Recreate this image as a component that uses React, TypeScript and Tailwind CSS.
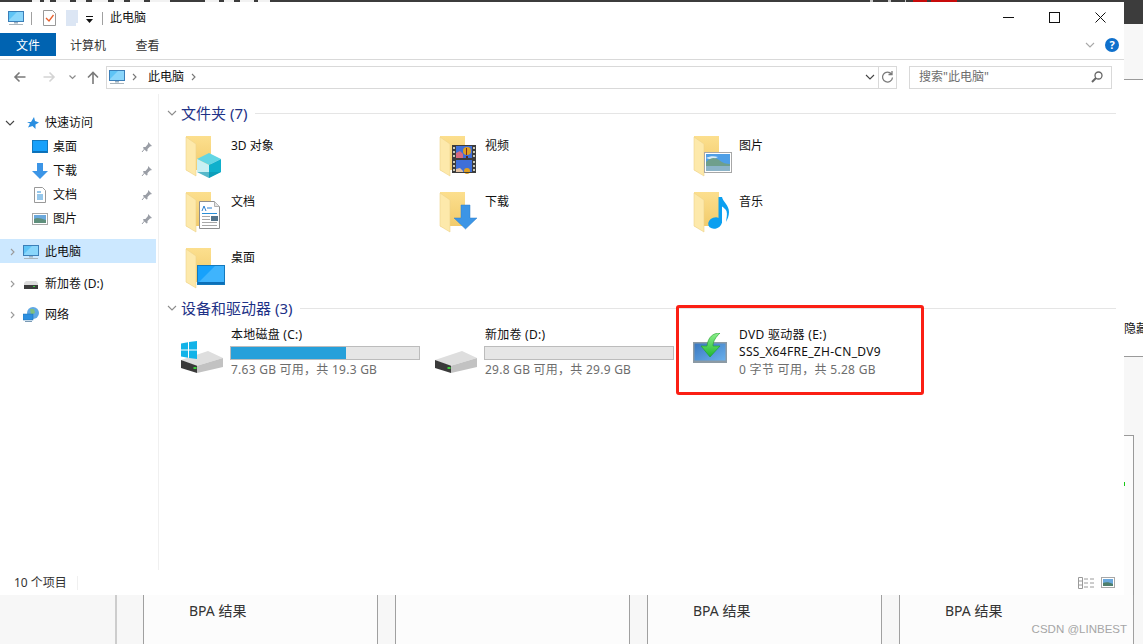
import React from "react";

const FONT = { fontFamily: '"Noto Sans","Noto Sans CJK SC",sans-serif' };

function FolderBase() {
  return (
    <>
      <defs>
        <linearGradient id="fb" x1="0" y1="0" x2="0" y2="1">
          <stop offset="0" stopColor="#fcdf8e" />
          <stop offset="1" stopColor="#f0c866" />
        </linearGradient>
      </defs>
      <path d="M1 1h25v34H11v5L1 35z" fill="url(#fb)" />
      <path d="M1 2l10 7v32L1 35z" fill="#fde9ab" stroke="#efd48c" strokeWidth="0.6" />
    </>
  );
}

function Ico({ children }: { children?: React.ReactNode }) {
  return (
    <svg width="46" height="46" viewBox="0 0 46 46" className="shrink-0 overflow-visible">
      <FolderBase />
      {children}
    </svg>
  );
}

const Cube = () => (
  <>
    <path d="M24 18l12 6-12 6-12-6z" fill="#62d6e4" />
    <path d="M12 24l12 6v13l-12-6z" fill="#c9f0f4" />
    <path d="M36 24l-12 6v13l12-6z" fill="#0fb0cc" />
    <path d="M24 37l12 0-12 6-12-6z" fill="#0b93ad" opacity=".6" />
  </>
);
const Film = () => (
  <>
    <rect x="13" y="10" width="24" height="28" fill="#3c3c3c" />
    <rect x="17" y="11" width="16" height="12" fill="#3f6fd8" />
    <rect x="17" y="25" width="16" height="12" fill="#3f6fd8" />
    <path d="M17 18l4-2 3 3v4h-7z" fill="#d86a80" />
    <path d="M17 34l4-1 3 3v1h-7z" fill="#e2c0a0" />
    <circle cx="28" cy="16" r="4" fill="#e0a020" />
    <rect x="27" y="13" width="1" height="7" fill="#7a2a20" />
    <rect x="27" y="21" width="2" height="2" fill="#5a2a20" />
    <circle cx="28" cy="36" r="3" fill="#e0a020" />
    <rect x="13" y="37" width="24" height="1" fill="#3c3c3c" />
    {[12, 16, 20, 26, 30, 34].map((y) => (
      <React.Fragment key={y}>
        <rect x="14" y={y} width="2" height="2" fill="#c9c9b8" />
        <rect x="34" y={y} width="2" height="2" fill="#c9c9b8" />
      </React.Fragment>
    ))}
  </>
);
const Pic = () => (
  <>
    <rect x="11.5" y="17.5" width="27" height="20" fill="#fff" stroke="#a7a7a7" />
    <rect x="13" y="19" width="24" height="17" fill="#4f9fe6" />
    <path d="M13 23c4-2 8-2 12-1l-6 3z" fill="#d8ecf8" />
    <path d="M13 27c5-5 9-5 13-2s7 4 11 4v7H13z" fill="#6f9f8c" />
    <rect x="13" y="31" width="24" height="5" fill="#8cb4c8" />
  </>
);
const Doc = () => (
  <>
    <path d="M14.5 10.5h15l5 5v22h-20z" fill="#fff" stroke="#8e8e8e" />
    <path d="M29.5 10.5v5h5" fill="#e4e4e4" stroke="#b0b0b0" />
    <path d="M17 20l2-5 2 5M22 17h5" stroke="#2a7fd0" fill="none" />
    <path d="M17 22.5h15" stroke="#2a8fd8" />
    <path d="M17 25.5h8M17 28.5h8M17 31.5h15M17 34.5h15" stroke="#a8a8a8" />
    <rect x="26" y="25" width="7" height="5" fill="#54748a" />
  </>
);
const Arrow = () => (
  <g transform="translate(15 14)">
    <path d="M7 0h9v13h7L11.500 24 0 13h7z" fill="#3c95e6" stroke="#2f7fc8" strokeWidth=".5" />
  </g>
);
const Music = () => (
  <>
    <ellipse cx="22" cy="32" rx="7" ry="5.500" fill="#0b9ff0" transform="rotate(-20 22 32)" />
    <path
      d="M25.500 6H29c1 5 7 8 7 15 0 4-1.500 7-3 10 .5-4 1.500-8 .5-11-1-2-3-3.500-4.500-4.500V32h-3.500z"
      fill="#0b9ff0"
    />
  </>
);
const Desk = () => (
  <>
    <rect x="12.5" y="18.500" width="27" height="19" fill="#17a1fb" stroke="#1379bd" />
    <path d="M13 37V36L30 19h9v18z" fill="#3fb4fd" />
    <rect x="13" y="35" width="26" height="2" fill="#0c6fb8" />
  </>
);

function Folder({ name, children }: { name: string; children?: React.ReactNode }) {
  return (
    <div className="flex items-start pl-[8px]">
      <Ico>{children}</Ico>
      <span className="text-[12px] leading-[20px] mt-[1px] text-[#111]">{name}</span>
    </div>
  );
}

function Hdd({ win }: { win?: boolean }) {
  return (
    <svg width="46" height="40" viewBox="0 0 46 40" className="shrink-0">
      <path d="M0 23l27-9 15 7-27 8z" fill="#dedede" />
      <path d="M16 28.700L42 21v9l-26 6z" fill="#c2c2c2" />
      <path d="M0 23l16 5.700V36L0 31z" fill="#3a3a3a" />
      <rect x="12.500" y="30" width="3" height="2" fill="#3bd13b" />
      {win && (
        <path
          d="M0 6.500l7-1.200v7.200H0zM8 5.100L16 4v8.500H8zM0 13.500h7v7.200L0 19.500zM8 13.500h8V22l-8-1.100z"
          fill="#12b3e8"
        />
      )}
    </svg>
  );
}

function Drive({
  name,
  used,
  sub,
  win,
}: {
  name: string;
  used: number;
  sub: string;
  win?: boolean;
}) {
  return (
    <div className="flex items-start h-[56px] pl-[4px]">
      <div className="w-[50px] pt-[10px] shrink-0">
        <Hdd win={win} />
      </div>
      <div className="w-[189px] tracking-[0.25px]">
        <div className="text-[12px] leading-[16px] text-[#111]">{name}</div>
        <div className="h-[14px] mt-[3px] -ml-[1px] border border-[#bcbcbc] bg-[#e6e6e6]">
          <div className="h-full bg-[#26a0da]" style={{ width: `${used}%` }} />
        </div>
        <div className="text-[12px] leading-[16px] mt-[2px] text-[#6d6d6d]">{sub}</div>
      </div>
    </div>
  );
}

function Chev({ className = "", d = "M1 1l4 4 4-4" }: { className?: string; d?: string }) {
  return (
    <svg width="10" height="10" viewBox="0 0 10 6" className={"overflow-visible shrink-0 " + className}>
      <path d={d} fill="none" stroke="currentColor" strokeWidth="1.100" />
    </svg>
  );
}

function Section({ title, children }: { title: string; children: React.ReactNode }) {
  return (
    <div>
      <div className="flex items-center h-[18px] pl-[1px]">
        <Chev className="text-[#8c8c8c] mr-[4px]" />
        <span className="text-[15px] leading-[18px] text-[#1e3287] whitespace-nowrap">{title}</span>
        <div className="flex-1 h-[1px] bg-[#e5e5e5] ml-[8px] mr-[8px]" />
      </div>
      {children}
    </div>
  );
}

function Pin() {
  return (
    <svg width="12" height="12" viewBox="0 0 12 12" className="absolute right-[3px]">
      <path d="M7 1l4 4-2 .5-2.500 2.500 0 2-1 .5-3.500-3.500.5-1h2L7 3z" fill="#9a9ea6" />
      <path d="M3.500 8L1 11" stroke="#9a9ea6" />
    </svg>
  );
}

function QuickItem({ name, children }: { name: string; children: React.ReactNode }) {
  return (
    <div className="relative flex items-center h-[24px] pl-[32px]">
      <span className="w-[21px] flex shrink-0">{children}</span>
      <span className="text-[12px] text-[#111]">{name}</span>
      <Pin />
    </div>
  );
}

const Monitor = ({ w = 16 }: { w?: number }) => (
  <svg width={w} height={w} viewBox="0 0 16 16" className="shrink-0">
    <rect x=".5" y="1.500" width="15" height="10" fill="#5ec4f6" stroke="#3c7fb8" />
    <path d="M1 11V10L9 2h6v9z" fill="#8ad6fb" />
    <rect x="6" y="12" width="4" height="1.500" fill="#9bb0c0" />
    <rect x="1" y="14" width="14" height="1" fill="#a8b4bc" />
  </svg>
);

export default function App() {
  return (
    <div className="relative w-[1143px] h-[644px] overflow-hidden bg-[#f7f7f7]" style={FONT}>
      {/* backdrop page behind the window */}
      <div className="absolute inset-x-0 top-0 h-[24px] bg-[#3c3c3c]">
        <svg width="1143" height="2" viewBox="0 0 1143 2" className="block">
          <path
            d="M32 0h8v2h-8zM44 0h6v2h-6zM56 0h14v2H56zM76 0h10v2H76zM92 0h16v2H92zM114 0h10v2h-10zM130 0h14v2h-14zM150 0h20v2h-20zM205 0h14v2h-14zM224 0h10v2h-10zM240 0h14v2h-14zM258 0h12v2h-12z"
            fill="#f2f2f2"
          />
          <path d="M870 0h3v2h-3zM888 0h3v2h-3zM905 0h1v2h-1z" fill="#c8c8c8" />
          <path d="M913 0h14v2h-14zM931 0h26v2h-26z" fill="#c80a0a" />
        </svg>
      </div>
      <div className="absolute left-[1124px] right-0 top-[24px] h-[56px] bg-[#f7f7f7] border-b border-[#9a9a9a]" />
      <div className="absolute left-[1124px] right-0 top-[80px] h-[277px] bg-white border-b border-[#9a9a9a]">
        <span className="absolute left-0 top-[241px] w-[19px] overflow-hidden whitespace-nowrap text-[12px] leading-[16px] text-[#111]">
          隐藏
        </span>
      </div>
      <div className="absolute left-[1124px] w-[10px] top-[435px] bottom-0 bg-[#fcfcfc] border-t border-r border-[#9a9a9a]" />
      <div className="absolute left-[1124px] top-[482px] w-[1px] h-[4px] bg-[#19c819]" />

      <div className="absolute left-0 right-0 top-[595px] bottom-0 flex text-[14px] text-[#333]">
        <div className="w-[117px] shrink-0 border-r-2 border-[#cdcdcd]" />
        <div className="w-[27px] shrink-0 border-r border-[#a0a0a0]" />
        <div className="w-[234px] shrink-0 bg-[#fcfcfc] pl-[45px] pt-[6px] leading-[20px] border-r border-[#a0a0a0]">BPA 结果</div>
        <div className="w-[18px] shrink-0 border-r border-[#a0a0a0]" />
        <div className="w-[234px] shrink-0 bg-[#fcfcfc] border-r border-[#a0a0a0]" />
        <div className="w-[18px] shrink-0 border-r border-[#a0a0a0]" />
        <div className="w-[234px] shrink-0 bg-[#fcfcfc] pl-[45px] pt-[6px] leading-[20px] border-r border-[#a0a0a0]">BPA 结果</div>
        <div className="w-[18px] shrink-0 border-r border-[#a0a0a0]" />
        <div className="w-[234px] shrink-0 bg-[#fcfcfc] pl-[45px] pt-[6px] leading-[20px] border-r border-[#a0a0a0]">BPA 结果</div>
      </div>
      <div
        className="absolute right-[16px] top-[621px] text-[11.5px] leading-[16px] text-[#a6a6a6] whitespace-nowrap"
        style={{ fontFamily: '"Liberation Sans",sans-serif' }}
      >
        CSDN @LINBEST
      </div>

      {/* explorer window */}
      <div className="absolute left-0 top-[2px] w-[1124px] h-[593px] bg-white flex flex-col">
        {/* title bar */}
        <div className="flex items-center h-[30px] shrink-0 pl-[8px] pt-[2px]">
          <Monitor />
          <div className="w-[1px] h-[13px] bg-[#a0a0a0] ml-[7px] mr-[11px]" />
          <svg width="14" height="16" viewBox="0 0 14 16" className="mr-[9px] shrink-0">
            <path d="M.5.500h9l3 3v12H.500z" fill="#fff" stroke="#999" />
            <path d="M3 8l3 3 4.500-6" fill="none" stroke="#e8602c" strokeWidth="1.300" />
          </svg>
          <svg width="13" height="16" viewBox="0 0 13 16" className="mr-[7px] shrink-0">
            <path d="M0 0h12v16H0z" fill="#dce6f4" />
            <path d="M10 13h3v3h-3z" fill="#fff" />
          </svg>
          <svg width="8" height="7" viewBox="0 0 8 7" className="mr-[8px] mt-[2px] shrink-0">
            <path d="M0 0h7v1H0zM0 3h7L3.500 7z" fill="#111" />
          </svg>
          <div className="w-[1px] h-[13px] bg-[#a0a0a0] mr-[7px]" />
          <span className="text-[12px] text-[#111]">此电脑</span>
          <div className="flex-1" />
          <div className="flex items-center -mt-[2px]">
            <svg width="11" height="11" viewBox="0 0 11 11" className="shrink-0 mr-[35px]">
              <path d="M0 5.500h11" stroke="#111" />
            </svg>
            <svg width="11" height="11" viewBox="0 0 11 11" className="shrink-0 mr-[35px]">
              <rect x=".5" y=".500" width="10" height="10" fill="none" stroke="#111" />
            </svg>
            <svg width="11" height="11" viewBox="0 0 11 11" className="shrink-0 mr-[18px]">
              <path d="M.5.500l10 10M10.500.500l-10 10" stroke="#111" />
            </svg>
          </div>
        </div>
        {/* ribbon */}
        <div className="flex items-stretch h-[28px] shrink-0 border-b border-[#d9d9d9] text-[12px] text-[#333]">
          <div className="w-[56px] h-[23px] mt-[1px] pt-[2px] bg-[#0063b1] text-white flex items-center justify-center">文件</div>
          <div className="w-[64px] h-[23px] mt-[1px] pt-[2px] flex items-center justify-center">计算机</div>
          <div className="w-[55px] h-[23px] mt-[1px] pt-[2px] flex items-center justify-center">查看</div>
          <div className="flex-1" />
          <div className="flex items-center h-[24px] mt-[1px] pr-[5px]">
            <Chev className="text-[#a8a8a8] mr-[10px]" />
            <div className="w-[14px] h-[14px] rounded-full bg-[#0f70cc] text-white text-[11px] font-bold leading-[14px] text-center">?</div>
          </div>
        </div>
        {/* address bar */}
        <div className="flex items-center h-[34px] shrink-0">
          <div className="w-[106px] flex items-center shrink-0 pl-[13px] h-full">
            <svg width="13" height="12" viewBox="0 0 13 12" className="mr-[17px] shrink-0">
              <path d="M12.500 6H2M6.500 1.500L2 6l4.500 4.500" fill="none" stroke="#7a7a7a" strokeWidth="1.600" />
            </svg>
            <svg width="13" height="12" viewBox="0 0 13 12" className="mr-[13px] shrink-0">
              <path d="M.5 6H11M6.500 1.500L11 6l-4.500 4.500" fill="none" stroke="#d4d4d4" strokeWidth="1.600" />
            </svg>
            <svg width="7" height="5" viewBox="0 0 7 5" className="mr-[11px] shrink-0">
              <path d="M.5.500L3.500 3.500 6.500.500" fill="none" stroke="#8c8c8c" strokeWidth="1.200" />
            </svg>
            <svg width="12" height="13" viewBox="0 0 12 13" className="shrink-0">
              <path d="M6 13V2M1 6.500L6 1.500l5 5" fill="none" stroke="#7a7a7a" strokeWidth="1.600" />
            </svg>
          </div>
          <div className="flex items-center w-[791px] h-[23px] border border-[#d9d9d9] pl-[2px] text-[12px] text-[#111]">
            <Monitor />
            <Chev className="mx-[5px] text-[#777]" d="M3 0l3 3-3 3" />
            <span className="ml-[3px]">此电脑</span>
            <Chev className="ml-[5px] text-[#777]" d="M3 0l3 3-3 3" />
            <div className="flex-1" />
            <Chev className="text-[#444] mr-[3px]" />
            <div className="w-[1px] h-full bg-[#d9d9d9]" />
            <svg width="17" height="14" viewBox="0 0 14 14" className="shrink-0">
              <path d="M11 4a5 5 0 1 0 1 3.500M11.500 1v3.500H8" fill="none" stroke="#7a7a7a" strokeWidth="1.300" />
            </svg>
          </div>
          <div className="w-[12px] shrink-0" />
          <div className="flex items-center w-[203px] h-[23px] border border-[#d9d9d9] pl-[9px] pr-[8px] text-[12px] text-[#6d6d6d]">
            <span>搜索"此电脑"</span>
            <div className="flex-1" />
            <svg width="12" height="12" viewBox="0 0 12 12" className="shrink-0">
              <circle cx="7.500" cy="4.500" r="3.500" fill="none" stroke="#666" strokeWidth="1.300" />
              <path d="M5 7l-4 4" stroke="#666" strokeWidth="2" />
            </svg>
          </div>
        </div>
        {/* body */}
        <div className="flex flex-1 min-h-0">
          <div className="w-[159px] shrink-0 border-r border-[#f0f0f0] pt-[17px]">
            <div className="w-[156px]">
              <div className="flex items-center h-[24px] pl-[5px]">
                <Chev className="text-[#444] mr-[10px]" />
                <svg width="14" height="14" viewBox="0 0 14 14" className="mr-[6px] shrink-0">
                  <path d="M9 1l1 4 4 1.500-3.500 2 0 4.500-3-3-4.500 1.500 2-4-3-1.500 4 0z" fill="#2a8ee0" />
                </svg>
                <span className="text-[12px] text-[#111]">快速访问</span>
              </div>
              <QuickItem name="桌面">
                <svg width="16" height="14" viewBox="0 0 16 14">
                  <rect x=".5" y=".500" width="15" height="12" fill="#17a1fb" stroke="#1379bd" />
                  <rect x="1" y="11" width="14" height="1.500" fill="#0c6fb8" />
                </svg>
              </QuickItem>
              <QuickItem name="下载">
                <svg width="16" height="16" viewBox="0 0 16 16">
                  <path d="M5 0h6v8h5l-8 8-8-8h5z" fill="#3c95e6" />
                </svg>
              </QuickItem>
              <QuickItem name="文档">
                <svg width="16" height="16" viewBox="0 0 16 16">
                  <path d="M2.500.500h8l3 3v12h-11z" fill="#fff" stroke="#999" />
                  <path d="M5 5h4M5 8h6M5 10h6M5 12h6" stroke="#2a8fd8" />
                </svg>
              </QuickItem>
              <QuickItem name="图片">
                <svg width="16" height="16" viewBox="0 0 16 16">
                  <rect x=".5" y="2.500" width="15" height="11" fill="#fff" stroke="#a7a7a7" />
                  <rect x="2" y="4" width="12" height="8" fill="#6aa8dc" />
                  <path d="M2 8c3-2 6-1 12 1v3H2z" fill="#5f8f7c" />
                </svg>
              </QuickItem>
              <div className="flex items-center h-[24px] mt-[8px] pt-[1px] bg-[#cce8ff] pl-[8px]">
                <Chev className="text-[#9a9a9a] mr-[5px]" d="M3 0l3 3-3 3" />
                <Monitor />
                <span className="ml-[6px] text-[12px] text-[#111]">此电脑</span>
              </div>
              <div className="flex items-center h-[24px] mt-[8px] pt-[1px] pl-[8px]">
                <Chev className="text-[#9a9a9a] mr-[5px]" d="M3 0l3 3-3 3" />
                <svg width="16" height="12" viewBox="0 0 16 12" className="shrink-0">
                  <path d="M1 5l2-2h10l2 2v4H1z" fill="#dcdcdc" />
                  <rect x="1" y="7" width="14" height="4" fill="#3c3c3c" />
                  <rect x="10" y="8" width="2" height="1" fill="#3bd13b" />
                </svg>
                <span className="ml-[6px] text-[12px] text-[#111]">新加卷 (D:)</span>
              </div>
              <div className="flex items-center h-[24px] mt-[7px] pt-[1px] pl-[8px]">
                <Chev className="text-[#9a9a9a] mr-[5px]" d="M3 0l3 3-3 3" />
                <svg width="16" height="16" viewBox="0 0 16 16" className="shrink-0">
                  <circle cx="10" cy="6" r="6" fill="#5fa8e4" />
                  <path d="M7 2l4 0 1 4-4 2z" fill="#7fbf7f" />
                  <rect x="0" y="7" width="10" height="6" fill="#2c8fe0" stroke="#1d6fb0" strokeWidth=".5" />
                  <rect x="2" y="14" width="7" height="1" fill="#7a9ab4" />
                </svg>
                <span className="ml-[6px] text-[12px] text-[#111]">网络</span>
              </div>
            </div>
          </div>
          {/* main */}
          <div className="flex-1 flex flex-col min-w-0 pt-[10px] pl-[7px]">
            <Section title="文件夹 (7)">
              <div className="grid grid-cols-[254px_254px_254px] grid-rows-[56px_56px_52px] pt-[13px] pl-[11px]">
                <Folder name="3D 对象"><Cube /></Folder>
                <Folder name="视频"><Film /></Folder>
                <Folder name="图片"><Pic /></Folder>
                <Folder name="文档"><Doc /></Folder>
                <Folder name="下载"><Arrow /></Folder>
                <Folder name="音乐"><Music /></Folder>
                <Folder name="桌面"><Desk /></Folder>
              </div>
            </Section>
            <Section title="设备和驱动器 (3)">
              <div className="grid grid-cols-[254px_254px_254px] pt-[10px] pl-[11px]">
                <Drive name="本地磁盘 (C:)" used={61} sub="7.63 GB 可用，共 19.3 GB" win />
                <Drive name="新加卷 (D:)" used={0} sub="29.8 GB 可用，共 29.9 GB" />
                <div className="relative flex items-start h-[56px] pl-[8px]">
                  <svg width="36" height="32" viewBox="0 0 36 32" className="shrink-0 mt-[6px]">
                    <defs>
                      <linearGradient id="dv" x1="0" y1="0" x2="1" y2="1">
                        <stop offset="0" stopColor="#3a78c0" />
                        <stop offset="1" stopColor="#6ab0ec" />
                      </linearGradient>
                      <linearGradient id="dg" x1="0" y1="0" x2="0" y2="1">
                        <stop offset="0" stopColor="#8cf08c" />
                        <stop offset="1" stopColor="#1fb82f" />
                      </linearGradient>
                    </defs>
                    <rect x="0" y="9" width="34" height="21" fill="#8c9aa4" />
                    <rect x="1.500" y="10.500" width="31" height="17" fill="url(#dv)" />
                    <path d="M27 0c-7 0-12 4-13 13H8l9 11 10-11h-7c0-5 3-9 7-13z" fill="url(#dg)" stroke="#1f9a2a" strokeWidth=".6" />
                  </svg>
                  <div className="ml-[10px] -mt-[1px] text-[12px] leading-[17px] tracking-[0.3px]">
                    <div className="text-[#111]">DVD 驱动器 (E:)</div>
                    <div className="text-[#111]">SSS_X64FRE_ZH-CN_DV9</div>
                    <div className="text-[#6d6d6d] mt-[1px]">0 字节 可用，共 5.28 GB</div>
                  </div>
                  <div className="absolute -left-[9px] -top-[22px] w-[248px] h-[90px] border-[3px] border-[#fb1f14] rounded-[3px]" />
                </div>
              </div>
            </Section>
          </div>
        </div>
        {/* status bar */}
        <div className="flex items-center h-[25px] shrink-0 pl-[14px] pr-[9px] text-[12px] text-[#333]">
          <span>10 个项目</span>
          <div className="w-[1px] h-[14px] bg-[#f0f0f0] ml-[10px]" />
          <div className="flex-1" />
          <svg width="17" height="12" viewBox="0 0 17 12" className="shrink-0 mr-[6px]">
            <path d="M.5.500h4v11h-4zM.5 4h4M.5 8h4" fill="none" stroke="#9a9a9a" />
            <path d="M6 2h4M12 2h4M6 6h4M12 6h4M6 10h4M12 10h4" stroke="#9a9a9a" />
          </svg>
          <svg width="14" height="11" viewBox="0 0 14 11" className="shrink-0">
            <rect x=".5" y=".500" width="13" height="10" fill="#fff" stroke="#a7a7a7" />
            <rect x="2" y="2" width="10" height="7" fill="#6aa8dc" />
            <path d="M2 6c3-1 6-1 10 1v2H2z" fill="#4f7f6c" />
          </svg>
        </div>
      </div>
    </div>
  );
}
